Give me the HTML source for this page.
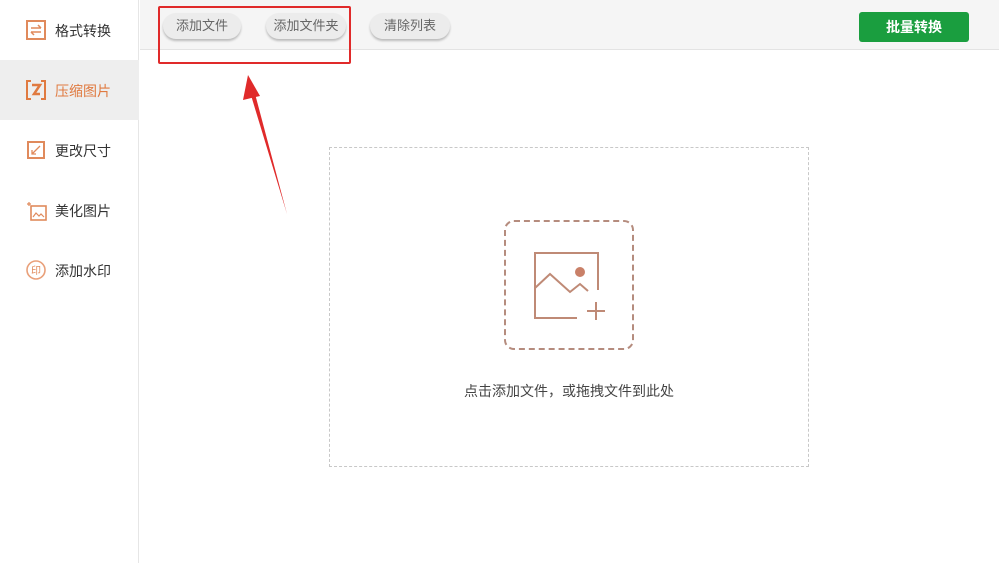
<!DOCTYPE html>
<html><head><meta charset="utf-8"><style>
*{margin:0;padding:0;box-sizing:border-box}
body{width:999px;height:563px;background:#fff;font-family:"Liberation Sans","Noto Sans CJK SC",sans-serif;position:relative;overflow:hidden}
.side{position:absolute;left:0;top:0;width:139px;height:563px;background:#fff;border-right:1px solid #e6e6e6}
.item{position:absolute;left:0;width:139px;height:60px;font-size:14px;color:#333}
.item span{position:absolute;left:55px;top:21px}
.item svg{position:absolute;left:26px;top:20px}
.top{position:absolute;left:140px;top:0;width:859px;height:50px;background:#f5f5f5;border-bottom:1px solid #e3e3e3}
.btn{position:absolute;top:13px;height:26px;border-radius:13px;background:#ececec;box-shadow:0 2px 2px #bbb;font-size:13px;color:#666;text-align:center;line-height:26px}
</style></head><body>
<div class="side">
<div class="item" style="top:0"><svg width="20" height="20"><rect x="1" y="1" width="18" height="18" fill="none" stroke="#e08a5c" stroke-width="2"/><path d="M5 8h10M12 5l3 3M5 12h10M8 15l-3-3" stroke="#e08a5c" stroke-width="1.5" fill="none"/></svg><span>格式转换</span></div>
<div class="item" style="top:60px;background:#eeeeee;color:#e07a40"><svg width="20" height="20"><path d="M5 1H1v18h4M15 1h4v18h-4" stroke="#e07a40" stroke-width="2" fill="none"/><path d="M6 5h8l-6 9h6" stroke="#e07a40" stroke-width="2.5" fill="none"/></svg><span>压缩图片</span></div>
<div class="item" style="top:120px"><svg width="20" height="20"><rect x="2" y="2" width="16" height="16" fill="none" stroke="#e08a5c" stroke-width="2"/><path d="M6 14l8-8M6 10v4h4" stroke="#e08a5c" stroke-width="1.3" fill="none"/></svg><span>更改尺寸</span></div>
<div class="item" style="top:180px"><svg width="22" height="22"><rect x="5" y="6" width="15" height="14" fill="none" stroke="#e08a5c" stroke-width="1.6"/><path d="M7 17l3-4 3 3 2-2 3 3M1 4h4M3 2v4" stroke="#e08a5c" stroke-width="1.2" fill="none"/></svg><span>美化图片</span></div>
<div class="item" style="top:240px"><svg width="20" height="20"><circle cx="10" cy="10" r="9" fill="none" stroke="#e9a07a" stroke-width="1.6"/><text x="10" y="14" font-size="10" text-anchor="middle" fill="#e08a5c">印</text></svg><span>添加水印</span></div>
</div>
<div class="top">
<div class="btn" style="left:23px;width:78px">添加文件</div>
<div class="btn" style="left:126px;width:80px">添加文件夹</div>
<div class="btn" style="left:230px;width:80px">清除列表</div>
<div style="position:absolute;left:719px;top:12px;width:110px;height:30px;background:#1a9e3f;border-radius:3px;color:#fff;font-size:14px;font-weight:bold;text-align:center;line-height:30px">批量转换</div>
</div>
<div style="position:absolute;left:158px;top:6px;width:193px;height:58px;border:2px solid #e02a2a;border-radius:2px"></div>
<svg style="position:absolute;left:230px;top:70px" width="70" height="150"><path d="M57 144L24 20L20 22Z" fill="#e02a2a"/><path d="M18 5L13 30L30 26Z" fill="#e02a2a"/></svg>
<div style="position:absolute;left:329px;top:147px;width:480px;height:320px;border:1px dashed #c8c8c8"></div>
<div style="position:absolute;left:504px;top:220px;width:130px;height:130px;border:2px dashed #b58c7e;border-radius:10px"></div>
<svg style="position:absolute;left:530px;top:250px" width="80" height="70"><path d="M68 40V3H5v65h42" stroke="#bf8a76" stroke-width="2" fill="none"/><circle cx="50" cy="22" r="5" fill="#c98068"/><path d="M5 38l15-14 20 18 10-8 8 7M66 52v18M57 61h18" stroke="#bf8a76" stroke-width="2" fill="none"/></svg>
<div style="position:absolute;left:329px;top:381px;width:480px;text-align:center;font-size:14px;color:#444">点击添加文件，或拖拽文件到此处</div>
</body></html>
